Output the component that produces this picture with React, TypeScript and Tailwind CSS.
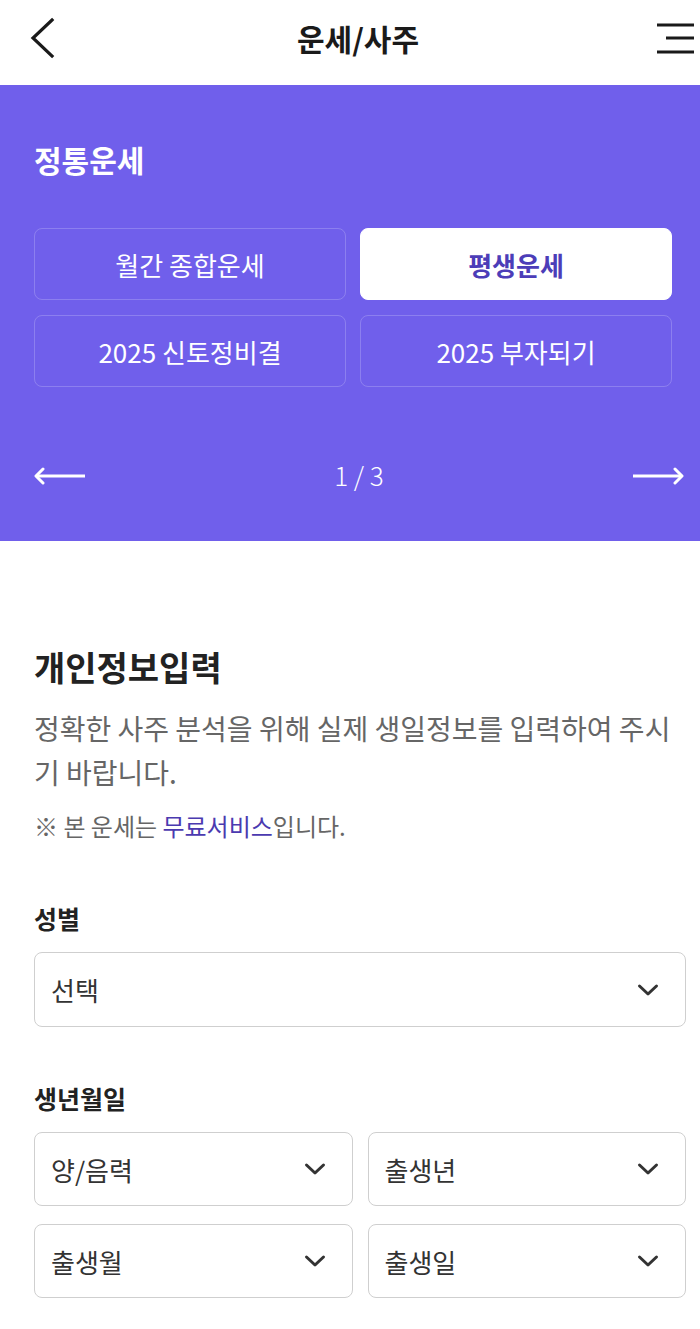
import React from "react";

const font = { fontFamily: '"Noto Sans CJK KR", "Noto Sans", sans-serif' };

function Chevron() {
  return (
    <svg width="22" height="14" viewBox="0 0 22 14" fill="none">
      <path d="M2.5 3 L11 11 L19.5 3" stroke="#333" strokeWidth="3" strokeLinecap="round" strokeLinejoin="round" />
    </svg>
  );
}

function Select({ label, className = "" }: { label: string; className?: string }) {
  return (
    <div
      className={`flex items-center justify-between rounded-[8px] border-[1.5px] border-[#cfcfcf] bg-white pl-[16px] pr-[26px] ${className}`}
    >
      <span className="text-[26px] text-[#333]">{label}</span>
      <Chevron />
    </div>
  );
}

export default function App() {
  return (
    <div className="w-[700px] bg-white" style={font}>
      {/* Header */}
      <div className="relative flex h-[85px] items-center justify-center">
        <svg className="absolute left-[28px] top-[16px]" width="30" height="46" viewBox="0 0 30 46" fill="none">
          <path d="M24 4 L5 22 L24 40" stroke="#1a1a1a" strokeWidth="3.2" strokeLinecap="square" />
        </svg>
        <h1 className="-mt-[8px] ml-[16px] text-[30px] font-bold text-[#1a1a1a]">운세/사주</h1>
        <svg className="absolute left-[656px] top-[22px]" width="40" height="34" viewBox="0 0 40 34" fill="none">
          <rect x="1" y="1.5" width="37" height="3" fill="#1a1a1a" />
          <rect x="10" y="14.5" width="28" height="3" fill="#1a1a1a" />
          <rect x="1" y="28.5" width="37" height="3" fill="#1a1a1a" />
        </svg>
      </div>

      {/* Purple section */}
      <div className="bg-[#705feb] pl-[34px] pr-[28px] pt-[54px] pb-[40px]">
        <h2 className="text-[30px] font-bold leading-[40px] text-white">정통운세</h2>
        <div className="mt-[49px] grid grid-cols-2 gap-x-[14px] gap-y-[15px]">
          <div className="flex h-[72px] items-center justify-center rounded-[8px] border-[1.5px] border-white/20 text-[26px] text-white">
            월간 종합운세
          </div>
          <div className="flex h-[72px] items-center justify-center rounded-[8px] border-[1.5px] border-white bg-white text-[26px] font-bold text-[#4c3db8]">
            평생운세
          </div>
          <div className="flex h-[72px] items-center justify-center rounded-[8px] border-[1.5px] border-white/20 text-[26px] text-white">
            2025 신토정비결
          </div>
          <div className="flex h-[72px] items-center justify-center rounded-[8px] border-[1.5px] border-white/20 text-[26px] text-white">
            2025 부자되기
          </div>
        </div>
        <div className="mt-[64px] flex h-[50px] items-center justify-between">
          <svg width="52" height="20" viewBox="0 0 52 20" fill="none">
            <path d="M2 10 H51" stroke="white" strokeWidth="3" />
            <path d="M9 3 L2 10 L9 17" stroke="white" strokeWidth="3" strokeLinecap="round" strokeLinejoin="round" />
          </svg>
          <span className="-mt-[4px] text-[26px] font-light text-white">1 / 3</span>
          <svg className="-mr-[12px]" width="52" height="20" viewBox="0 0 52 20" fill="none">
            <path d="M1 10 H50" stroke="white" strokeWidth="3" />
            <path d="M43 3 L50 10 L43 17" stroke="white" strokeWidth="3" strokeLinecap="round" strokeLinejoin="round" />
          </svg>
        </div>
      </div>

      {/* Form */}
      <div className="pl-[34px] pr-[14px] pt-[104px] pb-[31px]">
        <h3 className="text-[34px] font-bold leading-[44px] text-[#222]">개인정보입력</h3>
        <p className="mt-[17px] break-all text-[28px] leading-[44px] text-[#666]">
          정확한 사주 분석을 위해 실제 생일정보를 입력하여 주시기 바랍니다.
        </p>
        <p className="mt-[17px] text-[24px] leading-[30px] text-[#666]">
          ※ 본 운세는 <span className="text-[#4b3ab0]">무료서비스</span>입니다.
        </p>

        <div className="mt-[61px] text-[25px] font-bold leading-[32px] text-[#222]">성별</div>
        <Select label="선택" className="mt-[18px] h-[75px]" />

        <div className="mt-[55px] text-[25px] font-bold leading-[32px] text-[#222]">생년월일</div>
        <div className="mt-[18px] grid grid-cols-2 gap-x-[15px] gap-y-[18px]">
          <Select label="양/음력" className="h-[74px]" />
          <Select label="출생년" className="h-[74px]" />
          <Select label="출생월" className="h-[74px]" />
          <Select label="출생일" className="h-[74px]" />
        </div>
      </div>
    </div>
  );
}
